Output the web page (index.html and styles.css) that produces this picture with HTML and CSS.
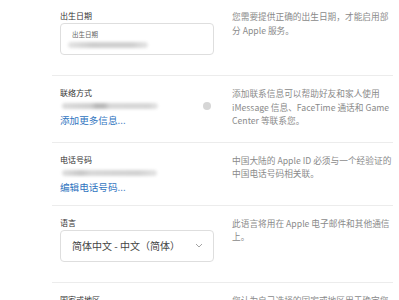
FILE: index.html
```html
<!DOCTYPE html>
<html lang="zh-CN">
<head>
  <meta charset="UTF-8">
  <meta name="viewport" content="width=device-width, initial-scale=1.0">
  <title>账户设置</title>
  <link rel="stylesheet" href="styles.css">
</head>
<body>
  <div class="settings">
    <section class="row row-first">
      <div class="field">
        <div class="field-title">出生日期</div>
        <div class="input-box">
          <div class="input-label">出生日期</div>
          <div class="blurred blurred-date"></div>
        </div>
      </div>
      <p class="desc">您需要提供正确的出生日期，才能启用部分 Apple 服务。</p>
    </section>

    <section class="row row-short">
      <div class="field">
        <div class="field-title">联络方式</div>
        <div class="value-line">
          <div class="blurred blurred-contact"></div>
          <span class="dot"></span>
        </div>
        <a href="#" class="field-link">添加更多信息...</a>
      </div>
      <p class="desc">添加联系信息可以帮助好友和家人使用 iMessage 信息、FaceTime 通话和 Game Center 等联系您。</p>
    </section>

    <section class="row row-short row-phone">
      <div class="field">
        <div class="field-title">电话号码</div>
        <div class="value-line">
          <div class="blurred blurred-phone"></div>
        </div>
        <a href="#" class="field-link">编辑电话号码...</a>
      </div>
      <p class="desc">中国大陆的 Apple ID 必须与一个经验证的中国电话号码相关联。</p>
    </section>

    <section class="row">
      <div class="field">
        <div class="field-title">语言</div>
        <div class="select-box">
          <span>简体中文 - 中文（简体）</span>
          <svg class="chevron" width="8" height="5" viewBox="0 0 8 5">
            <path d="M1 1l3 3 3-3" fill="none" stroke="#9a9a9a" stroke-width="0.9"/>
          </svg>
        </div>
      </div>
      <p class="desc">此语言将用在 Apple 电子邮件和其他通信上。</p>
    </section>

    <section class="row">
      <div class="field">
        <div class="field-title">国家或地区</div>
      </div>
      <p class="desc">您认为自己选择的国家或地区用于确定您所在的位置。</p>
    </section>
  </div>
</body>
</html>
```

FILE: styles.css
```css
body {
  margin: 0;
  background: #fff;
  font-family: "Noto Sans CJK SC", "Noto Sans", sans-serif;
  color: #333;
}
.settings {
  margin: -1px 6px 0 52px;
}
.row {
  display: grid;
  grid-template-columns: 154px 160px;
  column-gap: 18px;
  padding: 11px 0 20px 8px;
  border-bottom: 1px solid #ececec;
}
.row-short {
  padding-bottom: 14px;
}
.row-phone {
  padding-bottom: 11px;
}
.field-title {
  font-size: 8px;
  line-height: 12px;
  color: #333;
}
.input-box {
  margin-top: 1px;
  height: 30px;
  border: 1px solid #dedede;
  border-radius: 4px;
  padding: 6px 0 0 11px;
  box-sizing: border-box;
  height: 32px;
}
.input-label {
  font-size: 6.5px;
  line-height: 9px;
  color: #666;
}
.blurred {
  height: 6px;
  border-radius: 3px;
  background: #d4d4d4;
  filter: blur(1.4px);
}
.blurred-date {
  width: 80px;
  margin: 3px 0 0 -4px;
  background: linear-gradient(90deg, #e4e4e4, #cfcfcf 30%, #d0d0d0 80%, #e6e6e6);
}
.value-line {
  display: flex;
  justify-content: space-between;
  align-items: center;
  height: 14px;
  padding-right: 3px;
}
.blurred-contact {
  width: 96px;
  margin-left: 2px;
  background: linear-gradient(90deg, #dcdcdc, #d0d0d0 30%, #b8b8b8 36%, #bababa 44%, #d8d8d8 50%, #d6d6d6 90%, #e6e6e6);
}
.blurred-phone {
  width: 95px;
  margin-left: 2px;
  background: linear-gradient(90deg, #e0e0e0, #c8c8c8 20%, #d8d8d8 30%, #d2d2d2 80%, #e4e4e4);
}
.dot {
  width: 8px;
  height: 8px;
  border-radius: 50%;
  background: #d6d6d6;
}
.field-link {
  display: block;
  font-size: 9.6px;
  line-height: 14px;
  color: #2f74c0;
  text-decoration: none;
}
.select-box {
  margin-top: 1px;
  height: 32px;
  border: 1px solid #dedede;
  border-radius: 4px;
  box-sizing: border-box;
  display: flex;
  align-items: center;
  justify-content: space-between;
  padding: 0 10px 0 11px;
  font-size: 10px;
  color: #444;
}
.desc {
  margin: 0;
  font-size: 8.7px;
  line-height: 13.5px;
  color: #8a8a8a;
}
```
